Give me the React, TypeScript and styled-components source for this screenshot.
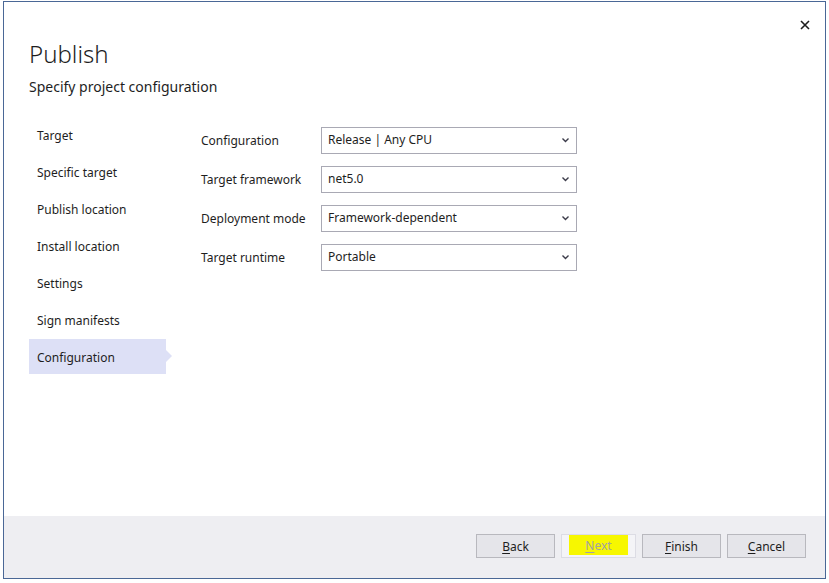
import styled, { createGlobalStyle } from "styled-components";

const GlobalStyle = createGlobalStyle`
  html, body {
    margin: 0;
    padding: 0;
    background: #ffffff;
  }
  body {
    font-family: "Noto Sans", "Open Sans", sans-serif;
    color: #1e1e1e;
  }
`;

const Page = styled.div`
  width: 829px;
  height: 583px;
  padding: 1px 3px 4px 3px;
  box-sizing: border-box;
`;

const Window = styled.div`
  height: 100%;
  border: 1px solid #4a6796;
  box-sizing: border-box;
  display: flex;
  flex-direction: column;
  background: #ffffff;
  position: relative;
`;

const CloseButton = styled.button`
  position: absolute;
  top: 14px;
  right: 11px;
  width: 18px;
  height: 18px;
  padding: 0;
  border: none;
  background: transparent;
  display: flex;
  align-items: center;
  justify-content: center;
`;

const Body = styled.div`
  flex: 1;
  padding: 36px 0 0 25px;
  display: flex;
  flex-direction: column;
`;

const Title = styled.h1`
  margin: 0;
  font-weight: 300;
  font-size: 24px;
  line-height: 32px;
  color: #1e1e1e;
`;

const Subtitle = styled.div`
  margin-top: 7px;
  font-size: 14px;
  line-height: 20px;
  color: #1e1e1e;
`;

const Content = styled.div`
  margin-top: 20px;
  display: flex;
`;

const Nav = styled.ul`
  list-style: none;
  margin: 0;
  padding: 0;
  width: 143px;
  display: flex;
  flex-direction: column;
  gap: 2px;
`;

const NavItem = styled.li<{ $active?: boolean }>`
  position: relative;
  width: 137px;
  height: 35px;
  box-sizing: border-box;
  padding: 1px 0 0 8px;
  display: flex;
  align-items: center;
  font-size: 12px;
  color: #1e1e1e;
  background: ${(p) => (p.$active ? "#dde0f6" : "transparent")};

  &::after {
    content: "";
    display: ${(p) => (p.$active ? "block" : "none")};
    position: absolute;
    right: -6px;
    top: 11px;
    border-top: 6px solid transparent;
    border-bottom: 6px solid transparent;
    border-left: 6px solid #dde0f6;
  }
`;

const Form = styled.div`
  margin-left: 29px;
  margin-top: 10px;
  display: grid;
  grid-template-columns: 120px 256px;
  row-gap: 12px;
  align-items: center;
  align-content: start;
`;

const Label = styled.label`
  font-size: 12px;
  color: #1e1e1e;
`;

const Select = styled.div`
  height: 27px;
  box-sizing: border-box;
  border: 1px solid #a9a9b4;
  background: #ffffff;
  display: flex;
  align-items: center;
  justify-content: space-between;
  padding: 0 6px 2px 6px;
  font-size: 12px;
  color: #1e1e1e;
`;

const Footer = styled.div`
  height: 62px;
  background: #eeeef2;
  display: flex;
  justify-content: flex-end;
  align-items: flex-start;
  padding: 18px 19px 0 0;
  box-sizing: border-box;
  gap: 6px;
`;

const Button = styled.button<{ $disabled?: boolean; $narrow?: boolean }>`
  width: ${(p) => (p.$narrow ? "75px" : "79px")};
  height: 24px;
  box-sizing: border-box;
  border: 1px solid ${(p) => (p.$disabled ? "#dcdce4" : "#b8b8be")};
  background: ${(p) => (p.$disabled ? "#f4f4f7" : "#e5e5ea")};
  font-family: "Noto Sans", "Open Sans", sans-serif;
  font-size: 12px;
  color: ${(p) => (p.$disabled ? "#a2a2a2" : "#1e1e1e")};
  display: flex;
  align-items: flex-start;
  justify-content: center;
  padding: 3px 0 0 0;

  u {
    text-underline-offset: 2px;
  }
`;

const Highlight = styled.span`
  background: #f7f700;
  width: 59px;
  height: 20px;
  margin-top: -3px;
  display: flex;
  align-items: center;
  justify-content: center;
`;

const Chevron = () => (
  <svg width="9" height="6" viewBox="0 0 9 6">
    <path d="M1.5 1.5 L4.5 4.5 L7.5 1.5" fill="none" stroke="#3c3c4a" strokeWidth="1.4" />
  </svg>
);

const navItems = [
  "Target",
  "Specific target",
  "Publish location",
  "Install location",
  "Settings",
  "Sign manifests",
  "Configuration",
];

const fields = [
  ["Configuration", "Release | Any CPU"],
  ["Target framework", "net5.0"],
  ["Deployment mode", "Framework-dependent"],
  ["Target runtime", "Portable"],
];

export default function App() {
  return (
    <>
      <GlobalStyle />
      <Page>
        <Window>
          <CloseButton aria-label="Close">
            <svg width="10" height="10" viewBox="0 0 10 10">
              <path d="M1 1 L9 9 M9 1 L1 9" stroke="#1e1e1e" strokeWidth="1.6" />
            </svg>
          </CloseButton>
          <Body>
            <Title>Publish</Title>
            <Subtitle>Specify project configuration</Subtitle>
            <Content>
              <Nav>
                {navItems.map((item) => (
                  <NavItem key={item} $active={item === "Configuration"}>
                    {item}
                  </NavItem>
                ))}
              </Nav>
              <Form>
                {fields.map(([label, value]) => [
                  <Label key={label}>{label}</Label>,
                  <Select key={label + "-v"}>
                    <span>{value}</span>
                    <Chevron />
                  </Select>,
                ])}
              </Form>
            </Content>
          </Body>
          <Footer>
            <Button>
              <span>
                <u>B</u>ack
              </span>
            </Button>
            <Button $disabled $narrow>
              <Highlight>
                <span>
                  <u>N</u>ext
                </span>
              </Highlight>
            </Button>
            <Button>
              <span>
                <u>F</u>inish
              </span>
            </Button>
            <Button>
              <span>
                <u>C</u>ancel
              </span>
            </Button>
          </Footer>
        </Window>
      </Page>
    </>
  );
}
